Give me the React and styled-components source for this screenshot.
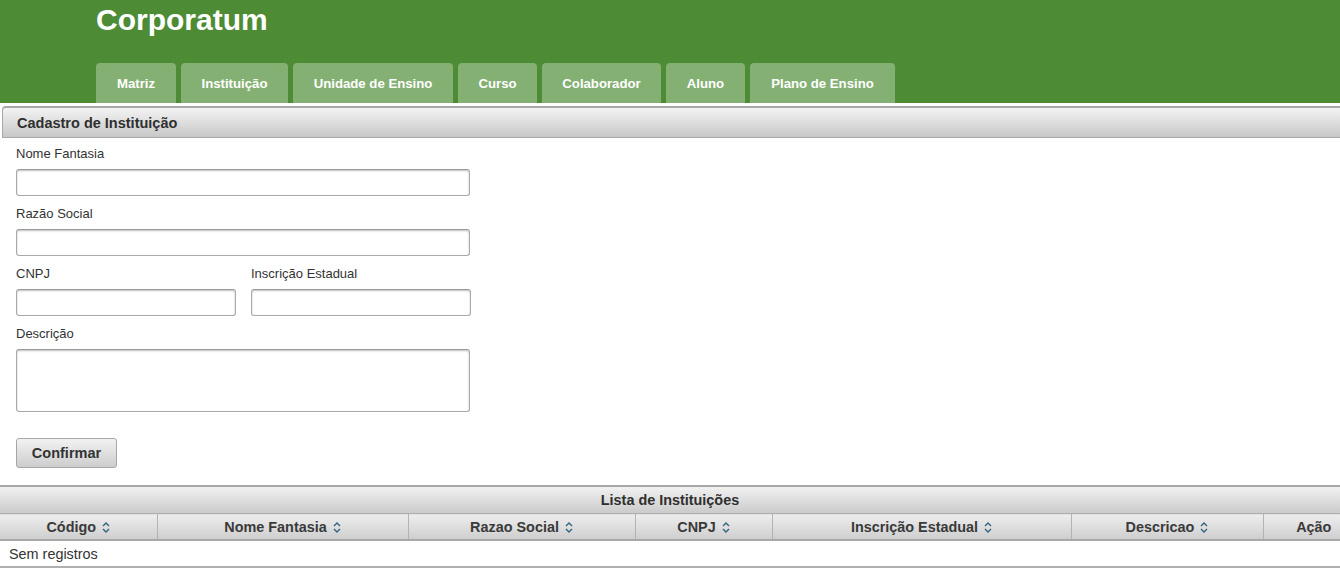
import React from "react";
import styled, { createGlobalStyle } from "styled-components";

const GlobalStyle = createGlobalStyle`
  html, body {
    margin: 0;
    padding: 0;
    background: #fff;
    overflow: hidden;
  }
  body {
    font-family: "Liberation Sans", Arial, sans-serif;
    color: #333;
  }
`;

const Page = styled.div`
  width: 1364px;
`;

const Header = styled.header`
  background: #4d8b35;
  height: 103px;
  padding-left: 96px;
  display: flex;
  flex-direction: column;
  justify-content: space-between;
  box-sizing: border-box;
`;

const Brand = styled.h1`
  margin: 0;
  padding-top: 3px;
  color: #fff;
  font-size: 30px;
  font-weight: bold;
  line-height: 34px;
`;

const Tabs = styled.nav`
  display: flex;
  gap: 5px;
`;

const Tab = styled.a`
  display: flex;
  align-items: center;
  justify-content: center;
  height: 40px;
  width: ${(p) => p.w}px;
  background: #84b073;
  border-radius: 4px 4px 0 0;
  color: #fff;
  font-size: 13.2px;
  font-weight: bold;
  text-decoration: none;
  cursor: pointer;
`;

const PanelHeader = styled.div`
  margin: 3px 0 0 2px;
  height: 29px;
  border: 1px solid #a8a8a8;
  border-width: 2px 0 1px 1px;
  border-radius: 4px 0 0 0;
  background: linear-gradient(#f3f3f3, #c8c8c8);
  display: flex;
  align-items: center;
  padding-left: 14px;
  font-size: 14.5px;
  font-weight: bold;
  color: #2f2f2f;
`;

const Form = styled.form`
  padding: 8px 16px 0;
  width: 454px;
  display: flex;
  flex-direction: column;
`;

const Row = styled.div`
  display: flex;
  gap: 15px;
  margin-right: -1px;
`;

const Field = styled.div`
  display: flex;
  flex-direction: column;
  flex: 1;
  min-width: 0;
  margin-bottom: 10px;
`;

const Label = styled.label`
  font-size: 13px;
  line-height: 16px;
  color: #333;
  margin-bottom: 7px;
`;

const Input = styled.input`
  width: 100%;
  height: 27px;
  box-sizing: border-box;
  border: 1px solid #a9a9a9;
  border-top-color: #999;
  border-radius: 3px;
  box-shadow: inset 0 1px 2px rgba(0, 0, 0, 0.25);
  font: inherit;
  padding: 0 6px;
  outline: none;
`;

const TextArea = styled.textarea`
  width: 100%;
  height: 63px;
  box-sizing: border-box;
  border: 1px solid #a9a9a9;
  border-top-color: #999;
  border-radius: 3px;
  box-shadow: inset 0 1px 2px rgba(0, 0, 0, 0.25);
  font: inherit;
  resize: none;
  outline: none;
`;

const Button = styled.button`
  align-self: flex-start;
  margin-top: 16px;
  width: 101px;
  height: 30px;
  border: 1px solid #a6a6a6;
  border-radius: 3px;
  background: linear-gradient(#f2f2f2, #cdcdcd);
  color: #333;
  font-family: "Liberation Sans", Arial, sans-serif;
  font-size: 14.5px;
  font-weight: bold;
  cursor: pointer;
`;

const ListPanel = styled.section`
  margin-top: 17px;
`;

const ListTitle = styled.div`
  height: 26px;
  border-top: 2px solid #a8a8a8;
  background: linear-gradient(#f2f2f2, #cbcbcb);
  display: flex;
  align-items: center;
  justify-content: center;
  padding-right: 24px;
  font-size: 14.4px;
  font-weight: bold;
  color: #2f2f2f;
`;

const Table = styled.table`
  width: 100%;
  border-collapse: collapse;
  table-layout: fixed;
`;

const Th = styled.th`
  height: 25px;
  padding: 0;
  border-top: 1px solid #b0b0b0;
  border-bottom: 2px solid #a8a8a8;
  border-left: 1px solid #b3b3b3;
  background: linear-gradient(#eeeeee, #cecece);
  font-size: 14.4px;
  font-weight: bold;
  color: #3a3a3a;
  text-align: center;
  &:first-child {
    border-left: none;
  }
`;

const SortIcon = styled.svg`
  margin-left: 6px;
  vertical-align: -1px;
`;

const Td = styled.td`
  height: 25px;
  padding: 0 9px;
  border-bottom: 2px solid #b0b0b0;
  font-size: 14.4px;
  color: #333;
`;

const Sort = () => (
  <SortIcon width="8" height="11" viewBox="0 0 8 11">
    <path
      d="M1 4 L4 1 L7 4 M1 7 L4 10 L7 7"
      fill="none"
      stroke="#2f6380"
      strokeWidth="1.4"
    />
  </SortIcon>
);

const tabs = [
  ["Matriz", 80],
  ["Instituição", 107],
  ["Unidade de Ensino", 160],
  ["Curso", 79],
  ["Colaborador", 119],
  ["Aluno", 79],
  ["Plano de Ensino", 145],
];

const columns = [
  ["Código", 157, true],
  ["Nome Fantasia", 251, true],
  ["Razao Social", 227, true],
  ["CNPJ", 137, true],
  ["Inscrição Estadual", 299, true],
  ["Descricao", 192, true],
  ["Ação", 101, false],
];

export default function App() {
  return (
    <Page>
      <GlobalStyle />
      <Header>
        <Brand>Corporatum</Brand>
        <Tabs>
          {tabs.map(([label, w]) => (
            <Tab key={label} w={w}>
              {label}
            </Tab>
          ))}
        </Tabs>
      </Header>

      <PanelHeader>Cadastro de Instituição</PanelHeader>
      <Form onSubmit={(e) => e.preventDefault()}>
        <Field>
          <Label>Nome Fantasia</Label>
          <Input type="text" />
        </Field>
        <Field>
          <Label>Razão Social</Label>
          <Input type="text" />
        </Field>
        <Row>
          <Field>
            <Label>CNPJ</Label>
            <Input type="text" />
          </Field>
          <Field>
            <Label>Inscrição Estadual</Label>
            <Input type="text" />
          </Field>
        </Row>
        <Field>
          <Label>Descrição</Label>
          <TextArea />
        </Field>
        <Button type="submit">Confirmar</Button>
      </Form>

      <ListPanel>
        <ListTitle>Lista de Instituições</ListTitle>
        <Table>
          <colgroup>
            {columns.map(([label, w]) => (
              <col key={label} style={{ width: w }} />
            ))}
          </colgroup>
          <thead>
            <tr>
              {columns.map(([label, , sortable]) => (
                <Th key={label}>
                  {label}
                  {sortable && <Sort />}
                </Th>
              ))}
            </tr>
          </thead>
          <tbody>
            <tr>
              <Td colSpan={columns.length}>Sem registros</Td>
            </tr>
          </tbody>
        </Table>
      </ListPanel>
    </Page>
  );
}
